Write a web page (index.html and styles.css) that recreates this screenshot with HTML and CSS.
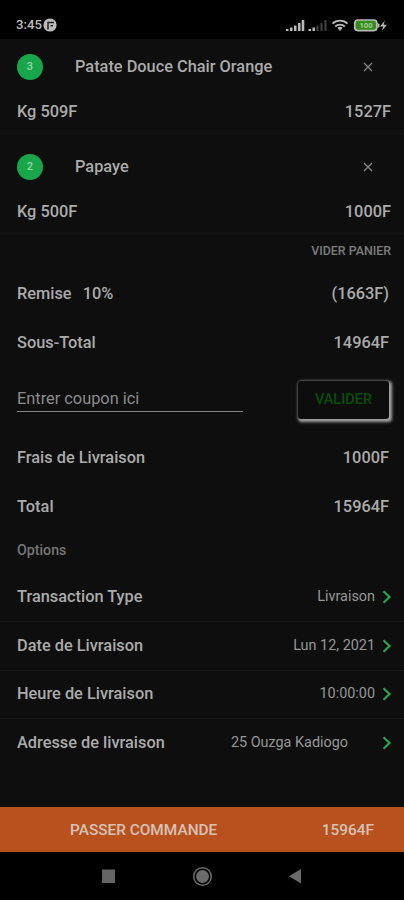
FILE: index.html
```
<!DOCTYPE html>
<html lang="fr">
<head>
<meta charset="utf-8">
<title>Panier</title>
<link rel="stylesheet" href="styles.css">
</head>
<body>
<div class="phone">
  <header class="status">
    <span class="clock">3:45</span>
    <svg class="app-dot" width="14" height="14" viewBox="0 0 14 14"><circle cx="7" cy="7" r="6.6" fill="#bcbcbc"/><path d="M5 11.500V4.600h6M7.500 7.800h2.500" fill="none" stroke="#222" stroke-width="1.500"/></svg>
    <svg class="status-icons" width="108" height="14" viewBox="0 0 108 14">
      <g fill="#b9b9b9">
        <path d="M1 11h2.500v2H1zM5 9.500h2.500V13H5zM9 7.500h2.500V13H9zM13 5h2.500v8H13zM16.700 2h2.600v11h-2.600z"/>
        <path d="M23.500 11h2.500v2h-2.500zM27.500 9.500h2.500V13h-2.500z"/>
        <path d="M31.500 7.500h2V13h-2zM35.500 5h2v8h-2zM39.500 2h2v11h-2z" fill="#444"/>
        <path d="M55 13l-2.600-3.200a4 4 0 0 1 5.200 0z"/>
        <path d="M99.800 2.500L95 8.600h3.200l-1.400 4.200L102 6.700h-3.300z"/>
      </g>
      <path d="M47.500 5.600a11 11 0 0 1 15 0M50.200 8.500a7 7 0 0 1 9.600 0" fill="none" stroke="#b9b9b9" stroke-width="1.900"/>
      <rect x="69.800" y="2" width="22" height="10.600" rx="3" fill="#348b1c" stroke="#b9b9b9" stroke-width="1.700"/>
      <path d="M92.500 5l2 1v3l-2 1z" fill="#b9b9b9"/>
      <text class="battery" x="81" y="10.300" text-anchor="middle">100</text>
    </svg>
  </header>

  <main class="cart">
    <section class="item">
      <div class="item-head"><span class="qty">3</span><span class="name">Patate Douce Chair Orange</span>
        <svg class="remove" width="10" height="10" viewBox="0 0 10 10"><path d="M1 1l8 8M9 1l-8 8"/></svg></div>
      <div class="item-price"><span>Kg 509F</span><span>1527F</span></div>
    </section>
    <section class="item">
      <div class="item-head"><span class="qty">2</span><span class="name">Papaye</span>
        <svg class="remove" width="10" height="10" viewBox="0 0 10 10"><path d="M1 1l8 8M9 1l-8 8"/></svg></div>
      <div class="item-price"><span>Kg 500F</span><span>1000F</span></div>
    </section>
    <div class="clear"><span>VIDER PANIER</span></div>
    <div class="line"><span>Remise<span class="rate">10%</span></span><span>(1663F)</span></div>
    <div class="line"><span>Sous-Total</span><span>14964F</span></div>
    <div class="coupon"><div class="field">Entrer coupon ici</div><div class="apply">VALIDER</div></div>
    <div class="line"><span>Frais de Livraison</span><span>1000F</span></div>
    <div class="line"><span>Total</span><span>15964F</span></div>
    <h2 class="options">Options</h2>
    <div class="option"><span>Transaction Type</span><span class="value">Livraison</span><svg class="chev" width="10" height="14" viewBox="0 0 10 14"><path d="M1.500 1.200L7.500 7l-6 5.800"/></svg></div>
    <div class="option"><span>Date de Livraison</span><span class="value">Lun 12, 2021</span><svg class="chev" width="10" height="14" viewBox="0 0 10 14"><path d="M1.500 1.200L7.500 7l-6 5.800"/></svg></div>
    <div class="option"><span>Heure de Livraison</span><span class="value">10:00:00</span><svg class="chev" width="10" height="14" viewBox="0 0 10 14"><path d="M1.500 1.200L7.500 7l-6 5.800"/></svg></div>
    <div class="option last"><span>Adresse de livraison</span><span class="value address">25 Ouzga Kadiogo</span><svg class="chev" width="10" height="14" viewBox="0 0 10 14"><path d="M1.500 1.200L7.500 7l-6 5.800"/></svg></div>
  </main>

  <div class="checkout"><span>PASSER COMMANDE</span><span class="amount">15964F</span></div>
  <nav class="nav">
    <svg width="404" height="48" viewBox="0 0 404 48">
      <rect x="102" y="17.500" width="13" height="13.500" fill="#646464"/>
      <circle cx="202.500" cy="24.500" r="8.800" fill="none" stroke="#6b6b6b" stroke-width="1.500"/>
      <circle cx="202.500" cy="24.500" r="6.500" fill="#6b6b6b"/>
      <path d="M289 24.300l12-7.300v14.500z" fill="#6b6b6b"/>
    </svg>
  </nav>
</div>
</body>
</html>
```
FILE: styles.css
```
* { box-sizing: border-box; }
body { margin: 0; background: #000; }
.phone {
  width: 404px;
  height: 900px;
  display: flex;
  flex-direction: column;
  overflow: hidden;
  background: #0e0e0e;
  color: #ababab;
  font: 500 16.35px/20px Roboto, sans-serif;
  white-space: nowrap;
}
svg { display: block; flex: none; }
.status {
  height: 39px;
  flex: none;
  display: flex;
  align-items: center;
  padding: 10px 11px 0 16px;
  background: #000;
}
.clock { font-size: 13.2px; color: #bcbcbc; width: 27px; }
.status-icons { margin-left: auto; }
.battery { font: 700 7.5px Roboto, sans-serif; fill: #a8d49c; }
.cart { flex: 1; min-height: 0; }
.item {
  height: 100px;
  padding: 0 13px 0 17px;
  border-bottom: 1px solid #131313;
}
.item:first-child { height: 95px; }
.item:first-child .item-head { height: 60px; padding-bottom: 5px; }
.item-head { display: flex; align-items: center; height: 65px; }
.qty {
  width: 26px;
  height: 26px;
  border-radius: 50%;
  background: #17a64a;
  color: #9fd0a8;
  font-size: 11px;
  line-height: 26px;
  text-align: center;
  margin-right: 32px;
}
.remove { margin: 0 18px 0 auto; fill: none; stroke: #858585; stroke-width: 1.3; }
.item-price { display: flex; justify-content: space-between; line-height: 25px; }
.clear {
  height: 36px;
  padding-right: 13px;
  text-align: right;
  font-size: 12.4px;
  line-height: 34px;
  color: #7d7d7d;
}
.line {
  height: 48.5px;
  display: flex;
  align-items: center;
  justify-content: space-between;
  padding: 0 15px 0 17px;
}
.rate { margin-left: 11px; }
.coupon {
  height: 67px;
  display: flex;
  justify-content: space-between;
  padding: 13.5px 15px 0 17px;
}
.field {
  width: 226px;
  height: 31px;
  border-bottom: 1px solid #858585;
  font-weight: 400;
  line-height: 36px;
  color: #8c8c8c;
}
.apply {
  width: 91px;
  height: 38px;
  border-radius: 3px;
  background: #0d0d0d;
  color: #064e08;
  font-size: 14.5px;
  line-height: 38px;
  text-align: center;
  box-shadow: 1.5px 1.5px 3px 1px #a5a5a5;
}
.options { margin: 0; font-size: 14.2px; font-weight: 500; line-height: 39px; height: 42.5px; padding-left: 17px; color: #757575; }
.option {
  height: 48.5px;
  display: flex;
  align-items: center;
  padding: 0 12px 0 17px;
  border-bottom: 1px solid #171717;
}
.option.last { border-bottom: 0; }
.value { margin-left: auto; margin-right: 7px; font-size: 14.4px; font-weight: 400; color: #979797; }
.address { margin-right: 34px; }
.chev { fill: none; stroke: #25a552; stroke-width: 2.2; }
.checkout {
  height: 45px;
  flex: none;
  display: flex;
  align-items: center;
  justify-content: space-between;
  padding: 0 30px 0 70px;
  background: #b8511d;
  color: #d8c2b8;
  font-size: 15.4px;
}
.nav { height: 48px; flex: none; background: #000; }
```
